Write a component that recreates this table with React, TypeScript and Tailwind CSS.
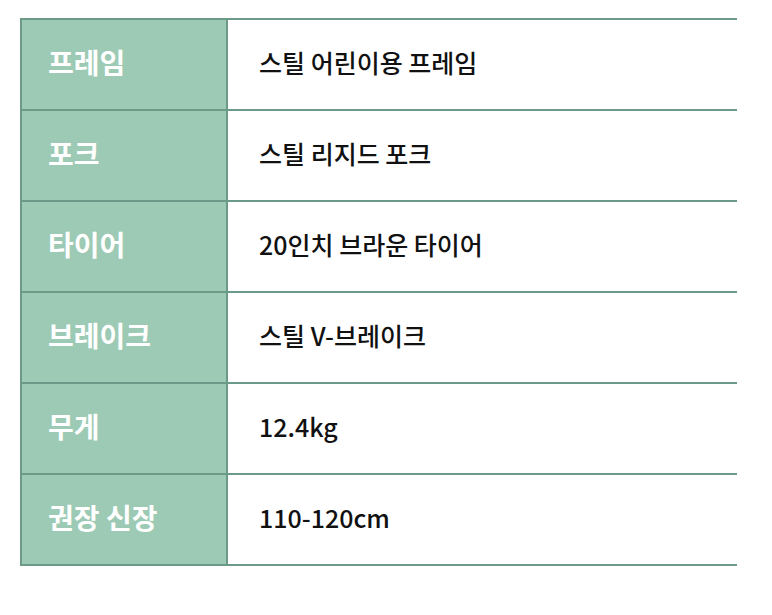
const rows: [string, string][] = [
  ["프레임", "스틸 어린이용 프레임"],
  ["포크", "스틸 리지드 포크"],
  ["타이어", "20인치 브라운 타이어"],
  ["브레이크", "스틸 V-브레이크"],
  ["무게", "12.4kg"],
  ["권장 신장", "110-120cm"],
];

export default function App() {
  return (
    <div
      className="w-[772px] h-[615px] bg-white pt-[18px] pl-[20px]"
      style={{ fontFamily: '"Noto Sans CJK KR", "Noto Sans", sans-serif' }}
    >
      <table className="w-[717px] border-collapse">
        <tbody>
          {rows.map(([k, v]) => (
            <tr key={k} className="h-[91px]">
              <th className="w-[206px] bg-[#9dcab4] border-2 border-[#6b9a89] pl-[26px] pb-[5px] text-left text-[28px] leading-none font-bold text-white align-middle">
                {k}
              </th>
              <td className="border-y-2 border-[#6b9a89] pl-[31px] pb-[5px] text-[25px] leading-none font-medium text-[#111] align-middle">
                {v}
              </td>
            </tr>
          ))}
        </tbody>
      </table>
    </div>
  );
}
